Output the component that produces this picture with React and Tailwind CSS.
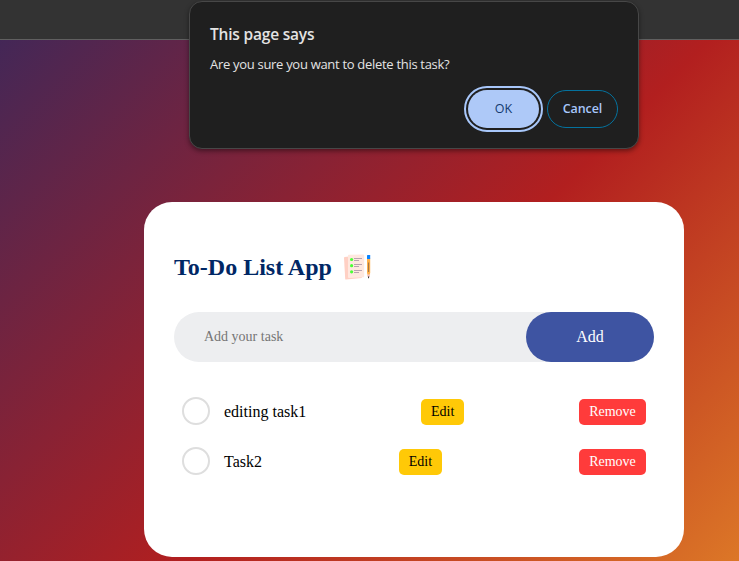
const tasks = ["editing task1", "Task2"];

function NotesIcon() {
  return (
    <svg width="30" height="30" viewBox="0 0 30 30" className="ml-[11px]">
      <path d="M1 5.8 Q1 5.2 1.7 5.1 L6 4.6 L18.8 25 L18.8 26 L3 27.6 Q2.3 27.6 2.2 26.9 Z" fill="#ffd0c4" />
      <path d="M5 3.6 Q5 2.9 5.8 2.8 L20.2 2.4 Q21.2 2.4 21.2 3.4 L21.2 24.4 Q21.2 25.2 20.4 25.2 L6 26 Q5 26 5 25 Z" fill="#ffe8df" />
      <g fill="#4bff37">
        <circle cx="8.6" cy="7.5" r="1.6" />
        <circle cx="8.6" cy="13.7" r="1.6" />
        <circle cx="8.6" cy="19.8" r="1.6" />
      </g>
      <g stroke="#b9a3b0" strokeWidth="1">
        <path d="M11 6.5h8M11 8.5h5M11 12.5h8M11 14.5h5M11 18.5h8M11 20.5h5" />
      </g>
      <path d="M24 6.5h3.2v14.5l-1.6 5l-1.6-5z" fill="#ffb04c" />
      <path d="M24 22.5h3.2l-.6 2.6h-2z" fill="#f3c6c6" />
      <path d="M25 24.4h1.2l-.2 1.8h-.8z" fill="#222" />
      <path d="M24 3.6q0-.6.6-.6h2q.6 0 .6.6V7h-3.2z" fill="#0a84ff" />
      <path d="M25.6 10.5v9.5" stroke="#8d6a48" strokeWidth="0.9" />
    </svg>
  );
}

function ConfirmDialog() {
  return (
    <div className="absolute left-[189px] top-px flex h-[148px] w-[450px] flex-col rounded-[13px] border border-[#474747] bg-[#1f1f1f] px-5 pt-[21px] font-['Open_Sans',sans-serif] shadow-[0_2px_5px_rgba(0,0,0,0.45)]">
      <h2 className="h-[22px] whitespace-nowrap text-[15.5px] leading-[22px] font-semibold tracking-[-0.2px] text-[#e3e3e3]">This page says</h2>
      <p className="mt-[10px] h-[18px] whitespace-nowrap text-[13px] leading-[18px] tracking-[-0.3px] text-[#e3e3e3]">
        Are you sure you want to delete this task?
      </p>
      <div className="mt-[13px] flex items-center justify-end gap-1">
        <div className="rounded-full border-2 border-[#a8c7fa] p-[2px]">
          <button className="block h-[38px] w-[71px] rounded-full bg-[#aec9f8] pt-px text-[12.5px] font-medium text-[#123a70]">OK</button>
        </div>
        <button className="h-[38px] w-[71px] rounded-full border border-[#04729e] pt-px text-[12.5px] font-semibold tracking-[-0.1px] text-[#a8c7fa]">Cancel</button>
      </div>
    </div>
  );
}

export default function App() {
  return (
    <div className="relative flex h-[561px] w-[739px] flex-col overflow-hidden font-['Liberation_Serif',serif]">
      <div className="h-10 shrink-0 border-b border-[#606060] bg-[#333333]" />
      <main className="flex-1 bg-[linear-gradient(135deg,#1a2a6c_-190px,#b21f1f_502px,#fdbb2d_1194px)] pl-36 pt-[162px]">
        <section className="h-[355px] w-[540px] rounded-[28px] bg-white px-[30px] pt-[50px]">
          <div className="flex h-[30px] items-center">
            <h1 className="whitespace-nowrap text-2xl leading-[30px] font-bold text-[#002765]">To-Do List App</h1>
            <NotesIcon />
          </div>
          <div className="mt-[30px] flex h-[50px] rounded-full bg-[#edeef0]">
            <input className="min-w-0 flex-1 bg-transparent pl-[30px] text-sm outline-none placeholder:text-[#757575]" placeholder="Add your task" />
            <button className="h-[50px] w-32 rounded-full bg-[#3e54a2] text-base text-white">Add</button>
          </div>
          <ul className="mt-[25px]">
            {tasks.map((task) => (
              <li key={task} className="flex h-[50px] items-center justify-between px-2">
                <div className="flex items-center">
                  <span className="mt-[-2px] size-7 rounded-full border-2 border-[#dedede]" />
                  <span className="ml-3.5 whitespace-nowrap text-base text-black">{task}</span>
                </div>
                <button className="h-[26px] w-[43px] rounded-[5px] bg-[#ffc907] text-sm text-black">Edit</button>
                <button className="h-[26px] w-[67px] rounded-[5px] bg-[#ff3b3b] text-sm text-white">Remove</button>
              </li>
            ))}
          </ul>
        </section>
      </main>
      <ConfirmDialog />
    </div>
  );
}
